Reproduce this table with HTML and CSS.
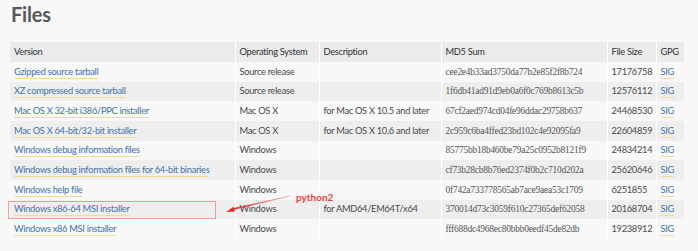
FILE: index.html
```html
<!DOCTYPE html>
<html lang="en">
<head>
<meta charset="utf-8">
<title>Files</title>
<link rel="stylesheet" href="styles.css">
</head>
<body>
<div class="page">
  <h1 class="title">Files</h1>
  <table class="files">
    <colgroup>
      <col class="c-version"><col class="c-os"><col class="c-desc"><col class="c-md5"><col class="c-size"><col class="c-gpg">
    </colgroup>
    <thead>
      <tr><th>Version</th><th>Operating System</th><th>Description</th><th>MD5 Sum</th><th>File Size</th><th>GPG</th></tr>
    </thead>
    <tbody>
      <tr><td><a href="#">Gzipped source tarball</a></td><td>Source release</td><td></td><td class="md5">cee2e4b33ad3750da77b2e85f2f8b724</td><td>17176758</td><td><a href="#">SIG</a></td></tr>
      <tr><td><a href="#">XZ compressed source tarball</a></td><td>Source release</td><td></td><td class="md5">1f6db41ad91d9eb0a6f0c769b8613c5b</td><td>12576112</td><td><a href="#">SIG</a></td></tr>
      <tr><td><a href="#">Mac OS X 32-bit i386/PPC installer</a></td><td>Mac OS X</td><td>for Mac OS X 10.5 and later</td><td class="md5">67cf2aed974cd04fe96ddac29758b637</td><td>24468530</td><td><a href="#">SIG</a></td></tr>
      <tr><td><a href="#">Mac OS X 64-bit/32-bit installer</a></td><td>Mac OS X</td><td>for Mac OS X 10.6 and later</td><td class="md5">2c959c6ba4ffed23bd102c4e92095fa9</td><td>22604859</td><td><a href="#">SIG</a></td></tr>
      <tr><td><a href="#">Windows debug information files</a></td><td>Windows</td><td></td><td class="md5">85775bb18b460be79a25c0952b8121f9</td><td>24834214</td><td><a href="#">SIG</a></td></tr>
      <tr><td><a href="#">Windows debug information files for 64-bit binaries</a></td><td>Windows</td><td></td><td class="md5">cf73b28cb8b76ed2374f0b2c710d202a</td><td>25620646</td><td><a href="#">SIG</a></td></tr>
      <tr><td><a href="#">Windows help file</a></td><td>Windows</td><td></td><td class="md5">0f742a733778565ab7ace9aea53c1709</td><td>6251855</td><td><a href="#">SIG</a></td></tr>
      <tr><td><a href="#">Windows x86-64 MSI installer</a></td><td>Windows</td><td>for AMD64/EM64T/x64</td><td class="md5">370014d73c3059f610c27365def62058</td><td>20168704</td><td><a href="#">SIG</a></td></tr>
      <tr><td><a href="#">Windows x86 MSI installer</a></td><td>Windows</td><td></td><td class="md5">fff688dc4968ec80bbb0eedf45de82db</td><td>19238912</td><td><a href="#">SIG</a></td></tr>
    </tbody>
  </table>

  <div class="mark-box"></div>
  <svg class="mark-arrow" width="80" height="24" viewBox="0 0 80 24" aria-hidden="true">
    <defs>
      <linearGradient id="ag" x1="1" y1="0" x2="0" y2="0">
        <stop offset="0" stop-color="#f26d6d" stop-opacity="0.5"/>
        <stop offset="1" stop-color="#e02b2b"/>
      </linearGradient>
    </defs>
    <polygon points="70,2.6 70,3.4 12,17.2 11.4,15.4" fill="url(#ag)"/>
    <polygon points="6,19 13.5,13.8 14.8,18.6" fill="#e02b2b"/>
  </svg>
  <div class="mark-label">python2</div>
</div>
</body>
</html>
```

FILE: styles.css
```css
html, body {
  margin: 0;
  padding: 0;
  background: #f8f8f8;
}

.page {
  position: relative;
  width: 698px;
  height: 251px;
  overflow: hidden;
  font-family: Lato, "Noto Sans", sans-serif;
  color: #444;
}

.title {
  margin: 2px 0 0 11px;
  font-family: Lato, "Noto Sans", sans-serif;
  font-size: 20px;
  line-height: 24px;
  font-weight: 700;
  color: #585858;
  letter-spacing: -0.2px;
}

.files {
  margin: 16px 0 0 10px;
  width: 674px;
  table-layout: fixed;
  border-collapse: collapse;
  font-size: 9.3px;
  letter-spacing: -0.3px;
}

.c-version { width: 225px; }
.c-os { width: 84px; }
.c-desc { width: 122px; }
.c-md5 { width: 166px; }
.c-size { width: 49px; }
.c-gpg { width: 28px; }

.files th,
.files td {
  padding: 0 4px 0 4px;
  border-right: 1px solid #ffffff;
  text-align: left;
  vertical-align: middle;
  white-space: nowrap;
  overflow: hidden;
  line-height: 12px;
}

.files th:last-child,
.files td:last-child { border-right: 0; }

.files th {
  height: 20px;
  font-weight: 400;
  color: #333;
  background: #ebebeb;
}

.files td {
  height: 19.67px;
  color: #4a4a4a;
}

.files tbody tr:nth-child(odd) td { background: #f8f8f8; }
.files tbody tr:nth-child(even) td { background: #eeeeee; }

.files a {
  color: #3e74a8;
  text-decoration: underline;
  text-decoration-color: #f3dc96;
  text-decoration-thickness: 1px;
  text-underline-offset: 3px;
  text-decoration-skip-ink: none;
}

.files td.md5 {
  font-family: "Liberation Serif", serif;
  font-size: 9.4px;
  letter-spacing: -0.2px;
  color: #555;
  padding-left: 4px;
}

.mark-box {
  position: absolute;
  left: 8px;
  top: 201px;
  width: 206px;
  height: 16px;
  border: 1px solid #f09a9a;
}

.mark-arrow {
  position: absolute;
  left: 220px;
  top: 193px;
}

.mark-label {
  position: absolute;
  left: 296px;
  top: 191px;
  font-family: Lato, "Noto Sans", sans-serif;
  font-size: 10px;
  line-height: 12px;
  font-weight: 700;
  color: #f2403a;
}
```
